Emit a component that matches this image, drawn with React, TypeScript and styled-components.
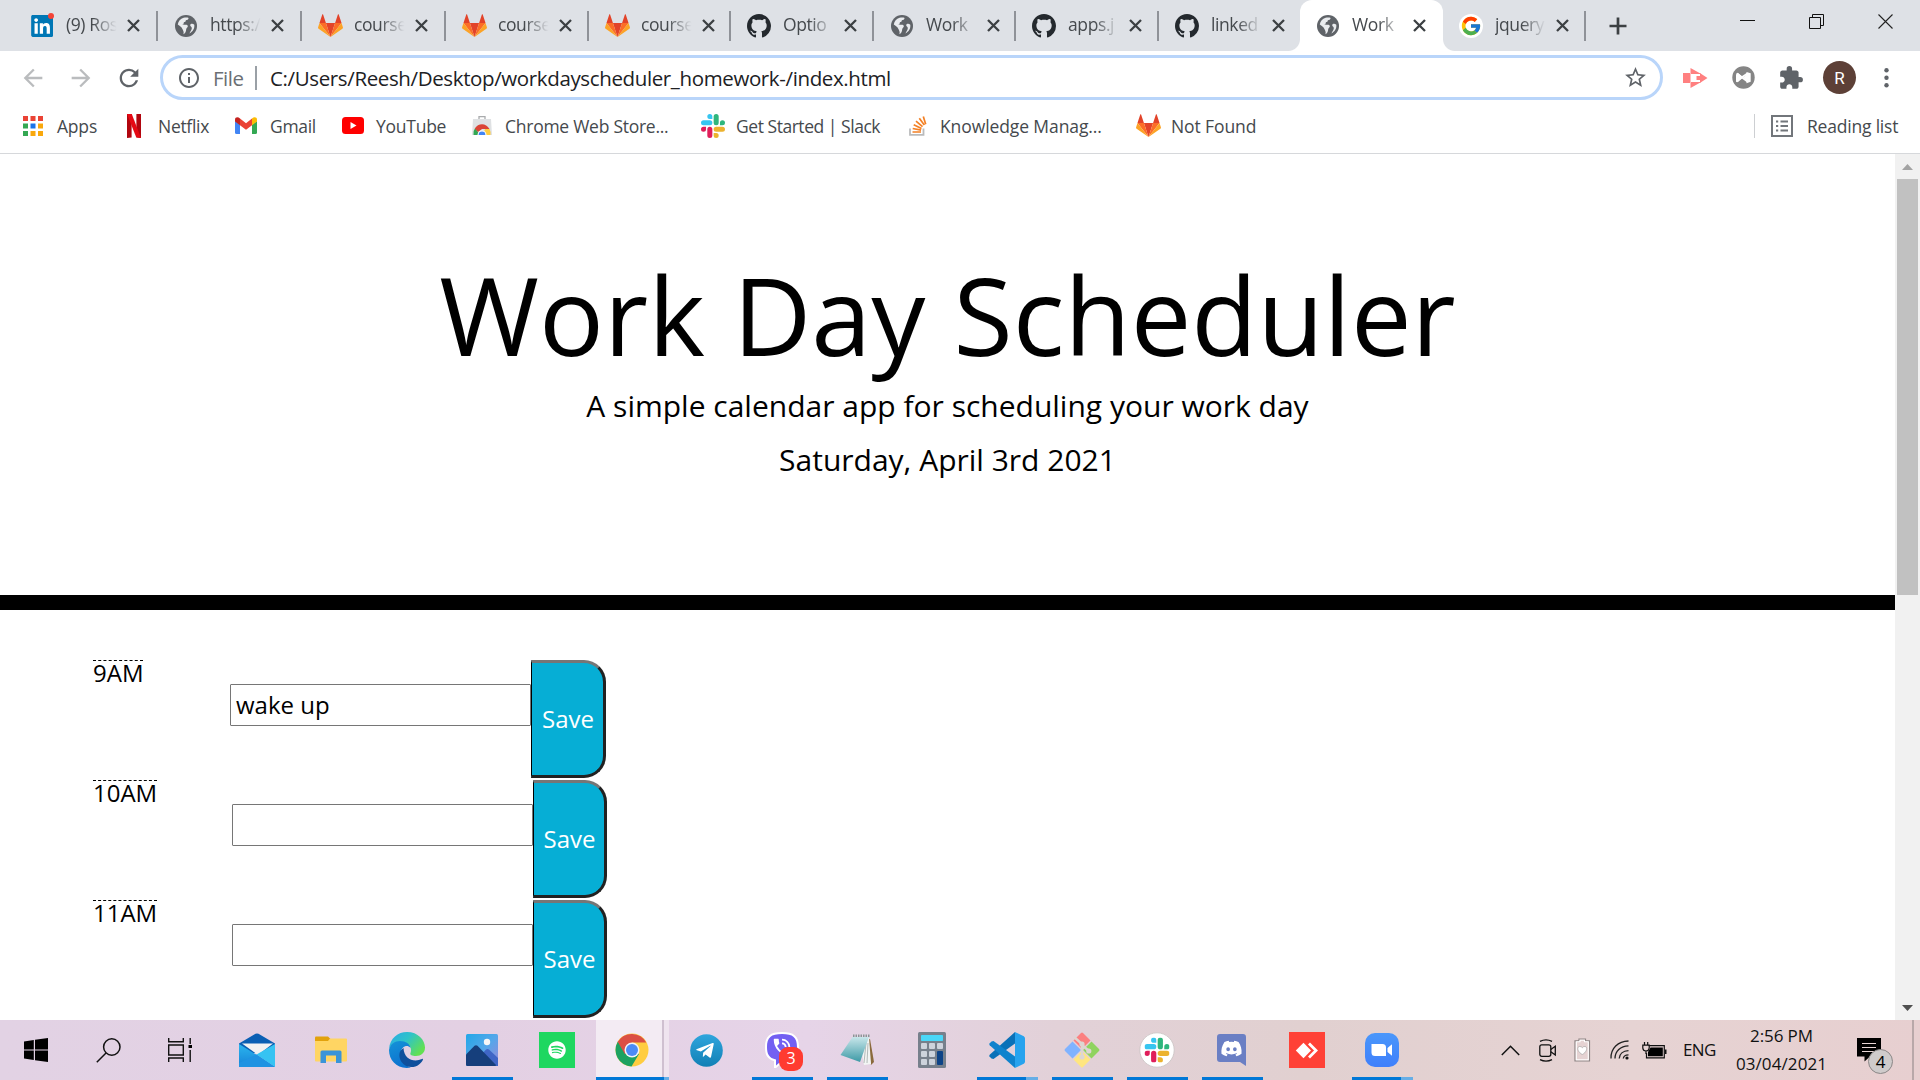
import React from "react";
import styled, { createGlobalStyle } from "styled-components";
import {
  MdArrowBack,
  MdArrowForward,
  MdRefresh,
  MdInfoOutline,
  MdStarBorder,
  MdExtension,
  MdPhoneInTalk,
} from "react-icons/md";
import { FaLinkedin, FaTelegramPlane, FaDiscord, FaSpotify } from "react-icons/fa";
import { FcGoogle } from "react-icons/fc";

const GlobalStyle = createGlobalStyle`
  * { box-sizing: border-box; }
  body {
    margin: 0;
    background: #fff;
    font-family: "Open Sans", "Noto Sans", sans-serif;
    overflow: hidden;
  }
  svg { display: block; flex: none; }
`;

/* ---------- Shell ---------- */

const Screen = styled.div`
  width: 1920px;
  height: 1080px;
  display: flex;
  flex-direction: column;
  overflow: hidden;
  background: #fff;
`;

/* ---------- Tab strip ---------- */

const TabStrip = styled.div`
  height: 51px;
  flex: none;
  display: flex;
  background: #dee1e6;
  padding-left: 14px;
`;

const TabBox = styled.div<{ $width: number; $active?: boolean; $divider?: boolean }>`
  position: relative;
  width: ${(p) => p.$width}px;
  height: 51px;
  flex: none;
  display: flex;
  align-items: center;
  padding-left: 16px;
  background: ${(p) => (p.$active ? "#fff" : "transparent")};
  border-radius: ${(p) => (p.$active ? "12px 12px 0 0" : "0")};
  &::after {
    content: "";
    display: ${(p) => (p.$divider ? "block" : "none")};
    position: absolute;
    right: 0;
    top: 11px;
    width: 2px;
    height: 30px;
    background: #8f9298;
  }
`;

const TabFoot = styled.span<{ $side: "left" | "right" }>`
  position: absolute;
  bottom: 0;
  ${(p) => p.$side}: -12px;
  width: 12px;
  height: 12px;
  background: radial-gradient(
    circle at ${(p) => (p.$side === "left" ? "0 0" : "100% 0")},
    #dee1e6 11.5px,
    #fff 12.5px
  );
`;

const TabIcon = styled.div`
  position: relative;
  width: 24px;
  height: 24px;
  flex: none;
  display: grid;
  place-items: center;
`;

const TabTitle = styled.div`
  width: 55px;
  margin-left: 12px;
  padding-bottom: 2px;
  line-height: 49px;
  font-size: 17.5px;
  letter-spacing: -0.4px;
  color: #45494d;
  white-space: nowrap;
  mask-image: linear-gradient(to right, #000 48%, transparent 92%);
`;

const TabClose = styled.div`
  margin-left: 6px;
`;

const NewTab = styled.div`
  height: 51px;
  margin-left: 23px;
  display: flex;
  align-items: center;
`;

const WindowControls = styled.div`
  margin-left: auto;
  height: 43px;
  display: grid;
  grid-template-columns: repeat(3, 69px);
  place-items: center;
`;

const NoticeDot = styled.span`
  position: absolute;
  right: 0;
  top: -1px;
  width: 6px;
  height: 6px;
  border-radius: 50%;
  background: #f44336;
`;

const WhiteDisc = styled.div`
  width: 24px;
  height: 24px;
  border-radius: 50%;
  background: #fff;
  display: grid;
  place-items: center;
`;

/* ---------- Toolbar ---------- */

const Toolbar = styled.div`
  height: 53px;
  flex: none;
  display: flex;
  align-items: center;
`;

const NavButtons = styled.div`
  width: 160px;
  display: flex;
  align-items: center;
  gap: 20px;
  padding-left: 19px;
  color: #babcbe;
`;

const Omnibox = styled.div`
  width: 1503px;
  height: 45px;
  display: flex;
  align-items: center;
  border: 3px solid #b9d5fa;
  border-radius: 23px;
  padding: 0 12px 0 14px;
  color: #5f6368;
`;

const Scheme = styled.span`
  margin-left: 12px;
  width: 42px;
  padding-top: 1px;
  line-height: 38px;
  font-size: 20.5px;
  letter-spacing: -0.5px;
  color: #6b6f74;
`;

const OmniDivider = styled.span`
  width: 2px;
  height: 24px;
  background: #9aa0a6;
`;

const Url = styled.span`
  flex: 1;
  margin-left: 13px;
  padding-top: 1px;
  font-size: 20.5px;
  line-height: 38px;
  letter-spacing: -0.37px;
  color: #202124;
  white-space: nowrap;
`;

const Extensions = styled.div`
  flex: 1;
  display: flex;
  align-items: center;
  padding-left: 20px;
  color: #5f6368;
`;

const ExtensionSlot = styled.div<{ $width: number }>`
  width: ${(p) => p.$width}px;
  flex: none;
`;

const Avatar = styled.div`
  width: 33px;
  height: 33px;
  margin-right: 28px;
  border-radius: 50%;
  background: #5d4037;
  color: #fff;
  font: 17px/34px Roboto, sans-serif;
  text-align: center;
`;

/* ---------- Bookmarks ---------- */

const BookmarkBar = styled.div`
  height: 50px;
  flex: none;
  display: flex;
  align-items: center;
  padding: 0 0 6px 23px;
  border-bottom: 1px solid #d6d8db;
  font-size: 17.5px;
  color: #45494d;
`;

const Bookmark = styled.div<{ $width: number }>`
  width: ${(p) => p.$width}px;
  flex: none;
  display: flex;
  align-items: center;
`;

const BookmarkIcon = styled.div<{ $slot: number }>`
  width: ${(p) => p.$slot}px;
  flex: none;
`;

const BookmarkText = styled.span<{ $spacing: number }>`
  line-height: 24px;
  letter-spacing: ${(p) => p.$spacing}px;
  white-space: nowrap;
`;

const ReadingList = styled.div`
  margin-left: auto;
  width: 166px;
  height: 24px;
  display: flex;
  align-items: center;
  gap: 14px;
  padding-left: 16px;
  border-left: 1px solid #cdcfd2;
`;

/* ---------- Page ---------- */

const Viewport = styled.div`
  height: 866px;
  flex: none;
  display: flex;
`;

const Page = styled.main`
  width: 1895px;
  height: 866px;
  overflow: hidden;
  color: #000;
`;

const Jumbotron = styled.header`
  height: 456px;
  padding-top: 96px;
  border-bottom: 15px solid #000;
  text-align: center;
`;

const Title = styled.h1`
  margin: 0 0 3px;
  font-size: 108px;
  font-weight: 400;
  line-height: 130px;
`;

const Lead = styled.p`
  margin: 0 0 9px;
  font-size: 30px;
  line-height: 45px;
`;

const Schedule = styled.section`
  padding: 50px 0 0 93px;
`;

const TimeBlock = styled.div`
  height: 120px;
  display: flex;
  align-items: flex-start;
`;

const HourColumn = styled.div<{ $width: number }>`
  width: ${(p) => p.$width}px;
`;

const Hour = styled.div`
  width: max-content;
  border-top: 1px dashed #000;
  font-size: 24px;
  line-height: 24px;
`;

const Entry = styled.div`
  width: 301px;
  height: 42px;
  margin-top: 24px;
  padding-left: 5px;
  border: 1px solid #767676;
  border-radius: 1px;
  font-size: 24px;
  line-height: 39px;
`;

const SaveButton = styled.button<{ $width: number }>`
  width: ${(p) => p.$width}px;
  height: 118px;
  padding: 0 0 2px 1px;
  border-style: solid;
  border-width: 3px 3px 3px 1px;
  border-color: #767676 #212121 #212121 #000;
  border-radius: 0 22px 22px 0;
  background: #06aed5;
  color: #fff;
  font: 24px/33px "Open Sans", sans-serif;
`;

const ScrollBar = styled.div`
  width: 25px;
  height: 866px;
  display: flex;
  flex-direction: column;
  align-items: center;
  background: #f1f1f1;
`;

const ScrollThumb = styled.div`
  width: 21px;
  height: 416px;
  margin-bottom: auto;
  background: #c1c1c1;
`;

const ScrollArrow = styled.div`
  height: 25px;
  display: grid;
  place-items: center;
`;

/* ---------- Taskbar ---------- */

const TaskBar = styled.footer`
  height: 60px;
  flex: none;
  display: flex;
  background: linear-gradient(
    90deg,
    #e2d2e4 0%,
    #e3d0e3 25%,
    #e6d4e8 42%,
    #e2d1d8 55%,
    #e1d0d0 68%,
    #e6d3d3 85%,
    #e7cfd0 100%
  );
`;

const SystemButtons = styled.div`
  width: 219px;
  display: grid;
  grid-template-columns: 72px 72px 72px;
  place-items: center;
`;

const AppCell = styled.div<{ $active?: boolean }>`
  position: relative;
  width: 75px;
  height: 60px;
  flex: none;
  display: grid;
  place-items: center;
  background: ${(p) =>
    p.$active
      ? "linear-gradient(90deg, transparent 2px, #f3ebf3 2px, #f3ebf3 68px, #cfc0d0 68px, #cfc0d0 70px, #efe4ef 70px, #efe4ef 75px)"
      : "none"};
`;

const Running = styled.span<{ $kind: "single" | "stack" | "active" }>`
  position: absolute;
  bottom: 0;
  left: ${(p) => (p.$kind === "active" ? 2 : 8)}px;
  width: ${(p) => (p.$kind === "active" ? 73 : 61)}px;
  height: 3px;
  background: ${(p) =>
    p.$kind === "single"
      ? "#0078d7"
      : `linear-gradient(90deg, #0078d7 ${p.$kind === "active" ? 68 : 49}px, #66aee6 0)`};
`;

const Badge = styled.span`
  position: absolute;
  left: 35px;
  top: 27px;
  width: 24px;
  height: 24px;
  border-radius: 9px;
  background: #ff3b30;
  color: #fff;
  font-size: 16px;
  line-height: 23px;
  text-align: center;
`;

const IconTile = styled.div<{ $color: string; $width: number }>`
  width: ${(p) => p.$width}px;
  height: 36px;
  background: ${(p) => p.$color};
  color: #fff;
  display: grid;
  place-items: center;
`;

const Tray = styled.div`
  margin-left: auto;
  width: 419px;
  display: flex;
  align-items: center;
  color: #111;
`;

const TraySlot = styled.div<{ $width: number }>`
  width: ${(p) => p.$width}px;
  flex: none;
`;

const Language = styled.div`
  width: 52px;
  font-size: 17px;
  line-height: 60px;
  letter-spacing: -0.6px;
`;

const Clock = styled.div`
  width: 93px;
  font-size: 17px;
  line-height: 28px;
  text-align: center;
  white-space: nowrap;
`;

const ClockLine = styled.div<{ $spacing: number }>`
  letter-spacing: ${(p) => p.$spacing}px;
`;

const Notifications = styled.div`
  position: relative;
  margin-left: 29px;
  width: 55px;
  height: 60px;
  padding-top: 18px;
`;

const CountBadge = styled.span`
  position: absolute;
  left: 11px;
  top: 29px;
  width: 25px;
  height: 25px;
  border: 1px solid #8b8787;
  border-radius: 50%;
  background: #cfcbcb;
  font-size: 17px;
  line-height: 23px;
  text-align: center;
  color: #000;
`;

const ShowDesktop = styled.div`
  width: 7px;
  height: 60px;
  border-left: 2px solid #b8a8a9;
`;

/* ---------- Drawings ---------- */

const Globe = () => (
  <svg width="22" height="22" viewBox="0 0 22 22">
    <circle cx="11" cy="11" r="11" fill="#5f6368" />
    <path d="M2.8 9.6C3.2 6.4 5.4 3.8 8.6 2.8C10.400 2.300 12.600 2.400 13.600 2.900C13.400 4.500 12.200 5 10.800 5.200C11 6.600 10 6.900 8.800 7.200C9.200 8.400 8.200 9 7.400 9.400C9.600 9.800 12.400 9.200 12.800 10.800C13.200 12.400 11.400 12.800 11.200 14.200C11 16 10.800 18 8.400 19.200C9.200 16.400 8 15.600 7.400 14C6.600 12 4.600 10.800 2.800 9.600ZM19.300 9.800C17.800 8.300 15.600 8.600 15.200 10.100C15 11.600 17 11.600 16.800 13.200C16.600 14.800 15.800 16 14.400 18.400C17.800 16.800 19.800 13.400 19.300 9.800Z" fill="#e9ebee" />
  </svg>
);

const GitHubMark = () => (
  <svg width="24" height="24" viewBox="0 0 16 16">
    <path fill="#24292e" d="M8 0C3.58 0 0 3.58 0 8c0 3.54 2.29 6.53 5.47 7.59.4.07.55-.17.55-.38 0-.19-.01-.82-.01-1.49-2.01.37-2.53-.49-2.69-.94-.09-.23-.48-.94-.82-1.13-.28-.15-.68-.52-.01-.53.63-.01 1.08.58 1.23.82.72 1.21 1.87.87 2.33.66.07-.52.28-.87.51-1.07-1.78-.2-3.64-.89-3.64-3.95 0-.87.31-1.59.82-2.15-.08-.2-.36-1.02.08-2.12 0 0 .67-.21 2.2.82.64-.18 1.32-.27 2-.27s1.36.09 2 .27c1.53-1.04 2.2-.82 2.2-.82.44 1.1.16 1.92.08 2.12.51.56.82 1.27.82 2.15 0 3.07-1.87 3.75-3.65 3.95.29.25.54.73.54 1.48 0 1.07-.01 1.93-.01 2.2 0 .21.15.46.55.38A8.01 8.01 0 0 0 16 8c0-4.42-3.58-8-8-8z" />
  </svg>
);

const GitLab = () => (
  <svg width="25" height="23" viewBox="0 0 24 22">
    <path d="M12 22 16.4 8.5H7.6Z" fill="#e24329" />
    <path d="M12 22 7.6 8.5H1.4ZM12 22 16.4 8.5H22.6Z" fill="#fc6d26" />
    <path d="M1.4 8.5.1 12.6C-.1 13.2.1 13.7.6 14L12 22ZM22.6 8.5 23.9 12.6C24.1 13.2 23.9 13.7 23.4 14L12 22Z" fill="#fca326" />
    <path d="M1.4 8.5H7.6L4.9.4C4.8 0 4.2 0 4.1.4ZM22.6 8.5H16.4L19.1.4C19.2 0 19.8 0 19.9.4Z" fill="#e24329" />
  </svg>
);

const Slack = ({ size }: { size: number }) => (
  <svg width={size} height={size} viewBox="0 0 24 24">
    <path fill="#e01e5a" d="M5.04 15.17a2.52 2.52 0 1 1-2.52-2.52h2.52zM6.31 15.17a2.52 2.52 0 0 1 5.04 0v6.31a2.52 2.52 0 0 1-5.04 0z" />
    <path fill="#36c5f0" d="M8.83 5.04a2.52 2.52 0 1 1 2.52-2.52v2.52zM8.83 6.31a2.52 2.52 0 0 1 0 5.04H2.52a2.52 2.52 0 0 1 0-5.04z" />
    <path fill="#2eb67d" d="M18.96 8.83a2.52 2.52 0 1 1 2.52 2.52h-2.52zM17.69 8.83a2.52 2.52 0 0 1-5.04 0V2.52a2.52 2.52 0 0 1 5.04 0z" />
    <path fill="#ecb22e" d="M15.17 18.96a2.52 2.52 0 1 1-2.52 2.52v-2.52zM15.17 17.69a2.52 2.52 0 0 1 0-5.04h6.31a2.52 2.52 0 0 1 0 5.04z" />
  </svg>
);

const LinkedIn = () => (
  <>
    <svg width="22" height="22" viewBox="0 0 22 22">
      <rect x="2" y="2" width="18" height="18" fill="#fff" />
      <FaLinkedin x="-1.4" y="-1.5" width="25" height="25" size={25} color="#0077b5" />
    </svg>
    <NoticeDot />
  </>
);

const AppsGrid = () => (
  <svg width="20" height="20" viewBox="0 0 20 20">
    {["#ea4335", "#ea4335", "#ea4335", "#34a853", "#1a73e8", "#f9a80c", "#34a853", "#f9a80c", "#f9a80c"].map((c, i) => (
      <rect key={i} x={(i % 3) * 7.5} y={Math.floor(i / 3) * 7.5} width="5" height="5" fill={c} />
    ))}
  </svg>
);

const Netflix = () => (
  <svg width="14" height="24" viewBox="0 0 14 24">
    <path d="M0 0h4.6v23.4L0 24ZM9.4 0H14v24l-4.6-.6Z" fill="#b1060f" />
    <path d="M0 0h4.8L14 24l-4.8-.7Z" fill="#e50914" />
  </svg>
);

const Gmail = () => (
  <svg width="22" height="17" viewBox="0 0 22 17">
    <path d="M0 4 5 7.6V17H1.5A1.5 1.5 0 0 1 0 15.5Z" fill="#4285f4" />
    <path d="M17 7.6 22 4V15.5A1.5 1.5 0 0 1 20.5 17H17Z" fill="#34a853" />
    <path d="M17 1.5C19-.5 22 0 22 2.7V4.5L17 8.2Z" fill="#fbbc04" />
    <path d="M5 1.5 11 6.2 17 1.5V8.2L11 12.7 5 8.2Z" fill="#ea4335" />
    <path d="M0 2.7C0 0 3-.5 5 1.5V8.2L0 4.5Z" fill="#c5221f" />
  </svg>
);

const YouTube = () => (
  <svg width="22" height="17" viewBox="0 0 22 17">
    <rect width="22" height="17" rx="3.5" fill="#f00" />
    <path d="M8.5 5v7l6-3.5Z" fill="#fff" />
  </svg>
);

const WebStore = () => (
  <svg width="20" height="20" viewBox="0 0 20 20">
    <path d="M7 3V.7h6V3" fill="none" stroke="#a9abad" strokeWidth="1.3" />
    <path d="M1 3h18l1 16H0Z" fill="#dfe1e3" />
    <path d="M1.5 19a8.5 8.5 0 0 1 1.7-7L8 19Z" fill="#34a853" />
    <path d="M2.8 12.6C6 7 14 6.5 17.5 13H10l-4 3Z" fill="#db4437" />
    <path d="M17.5 13a9 9 0 0 1 1 6H11l2-6Z" fill="#ffcd40" />
    <path d="M5.5 19a4.5 4.5 0 0 1 9 0Z" fill="#fff" />
    <path d="M6.6 19a3.4 3.4 0 0 1 6.8 0Z" fill="#4285f4" />
  </svg>
);

const StackOverflow = () => (
  <svg width="18" height="20" viewBox="0 0 18 20">
    <path d="M1 12.5V18.8H14.5V12.5" fill="none" stroke="#babbbc" strokeWidth="1.8" />
    <g stroke="#f48024" strokeWidth="1.7">
      <path d="M3.5 16H12M3.7 12.5 12.1 14.2M4.7 8.8 12.5 12.4M7 5.2 13.5 10.6M10.3 2.3 15.3 9.1M14.3.4 16.7 8.3" />
    </g>
  </svg>
);

const TabCross = () => (
  <svg width="13" height="13" viewBox="0 0 13 13">
    <path d="M1 1 12 12M12 1 1 12" stroke="#3c4043" strokeWidth="2.300" />
  </svg>
);

const Plus = () => (
  <svg width="18" height="18" viewBox="0 0 18 18">
    <path d="M9 .5V17.500M.5 9H17.500" stroke="#3c4043" strokeWidth="2.700" />
  </svg>
);

const Screencast = () => (
  <svg width="25" height="20" viewBox="0 0 25 20">
    <path d="M0 5H7.500V15H0ZM7.500 0 16.500 5H7.500ZM7.500 20V15H16.500ZM18 5.800 24.500 10 18 14.200Z" fill="#ff8080" />
    <path d="M8 5.500H17.500V14.500H8" fill="none" stroke="#ff8080" strokeWidth="1" />
    <path d="M17.500 8H13.500V12H17.500Z" fill="#ff8080" />
  </svg>
);

const VsBadge = () => (
  <svg width="23" height="23" viewBox="0 0 23 23">
    <circle cx="11.5" cy="11.5" r="11.2" fill="#858585" />
    <path d="M4.300 7.500 5.800 6.800 14.500 14.500V8.500L5.800 16.200 4.300 15.500ZM14.500 6 18.700 7.200V15.800L14.500 17.200Z" fill="#fff" />
    <path d="M5 8.500V14.500L15.500 7.500M5.500 8 15.500 15.500" fill="none" stroke="#fff" strokeWidth="2" />
  </svg>
);

const MenuDots = () => (
  <svg width="5" height="20" viewBox="0 0 5 20">
    <circle cx="2.500" cy="2.300" r="2.200" fill="#5f6368" />
    <circle cx="2.500" cy="9.800" r="2.200" fill="#5f6368" />
    <circle cx="2.500" cy="17.300" r="2.200" fill="#5f6368" />
  </svg>
);

const ReadingListIcon = () => (
  <svg width="22" height="22" viewBox="0 0 22 22">
    <rect x="1" y="1" width="20" height="20" fill="none" stroke="#72767b" strokeWidth="2" />
    <path d="M5 6.500H7.200M9.500 6.500H17M5 11H7.200M9.500 11H17M5 15.500H7.200M9.500 15.500H17" stroke="#72767b" strokeWidth="2" />
  </svg>
);

const MinimizeGlyph = () => (
  <svg width="15" height="15" viewBox="0 0 15 15">
    <path d="M0 6.500h15" stroke="#111" strokeWidth="1" />
  </svg>
);

const RestoreGlyph = () => (
  <svg width="15" height="15" viewBox="0 0 15 15" fill="none" stroke="#111" strokeWidth="1">
    <path d="M.5 3.5h11v11h-11ZM3.5 3.5V.5h11v11h-3" />
  </svg>
);

const CloseGlyph = () => (
  <svg width="15" height="15" viewBox="0 0 15 15">
    <path d="M.5.5l14 14M14.5.5l-14 14" stroke="#222" strokeWidth="1.1" />
  </svg>
);

const WindowsLogo = () => (
  <svg width="24" height="24" viewBox="0 0 24 24">
    <path d="M0 3.4 9.8 2v9.4H0ZM11 1.8 24 0v11.4H11ZM0 12.5h9.8V22L0 20.6ZM11 12.5h13V24l-13-1.8Z" fill="#000" />
  </svg>
);

const SearchGlyph = () => (
  <svg width="25" height="25" viewBox="0 0 25 25" fill="none" stroke="#111" strokeWidth="1.5">
    <circle cx="15.8" cy="9" r="8.2" />
    <path d="M10 15 .8 24.2" />
  </svg>
);

const TaskViewGlyph = () => (
  <svg width="24" height="24" viewBox="0 0 24 24" fill="none" stroke="#111" strokeWidth="1.4">
    <path d="M.7 0v3.8h14.6V0M.7 24v-4h14.6v4M.7 7h14.6v10H.7ZM22.2 0v6M22.2 12v12" />
    <path d="M20.5 8.5H24" stroke="#000" strokeWidth="3" />
  </svg>
);

const MailIcon = () => (
  <svg width="36" height="34" viewBox="0 0 36 34">
    <defs>
      <linearGradient id="mailBody" x1="0" y1="0" x2="0" y2="1">
        <stop offset="0" stopColor="#2bb5ee" />
        <stop offset="1" stopColor="#1683d8" />
      </linearGradient>
    </defs>
    <path d="M0 10.5 16.5.8Q18 0 19.5.8L36 10.5V20H0Z" fill="#0a5fb4" />
    <path d="M3 10.5H34L19 22Z" fill="#f2f2f2" />
    <path d="M0 11 18 22 36 34H0Z" fill="url(#mailBody)" />
    <path d="M36 11 17.5 21.5 36 34Z" fill="#36c3f2" />
    <path d="M0 34V30L17.500 21.500 36 34Z" fill="#1f93e2" />
  </svg>
);

const FolderIcon = () => (
  <svg width="33" height="28" viewBox="0 0 33 28">
    <path d="M0 6V1.5Q0 .5 1 .5H13l2.5 2.5L13 6Z" fill="#e2a20c" />
    <path d="M0 5H13L15 2.5H31Q32 2.5 32 3.5V24.5Q32 25.5 31 25.5H1Q0 25.5 0 24.5Z" fill="#ffd563" />
    <path d="M5.5 27V16Q5.5 14.5 7 14.5H25Q26.5 14.5 26.5 16V27H21V19.5H11V27Z" fill="#3a94d8" />
  </svg>
);

const EdgeIcon = () => (
  <svg width="36" height="36" viewBox="0 0 36 36">
    <defs>
      <linearGradient id="edgeTop" x1="0" y1="0" x2="1" y2=".6">
        <stop offset="0" stopColor="#2aa8e8" />
        <stop offset=".5" stopColor="#2fc3c9" />
        <stop offset="1" stopColor="#62e052" />
      </linearGradient>
      <linearGradient id="edgeSide" x1="0" y1="0" x2=".4" y2="1">
        <stop offset="0" stopColor="#1593d8" />
        <stop offset="1" stopColor="#0c72cf" />
      </linearGradient>
    </defs>
    <path d="M0 17C1 6 9 0 18 0C29 0 36 8 36 15.5C36 21 32 24 27 24C23 24 20.5 23 21.5 21C23 18 22 11 13 10C7 9.5 2 12 0 17Z" fill="url(#edgeTop)" />
    <path d="M0 18C1 12 6 9 11 9C17 9 21 12 21.5 16C18 12 13 15 12 19C10 26 15 33 22 35.5C9 38 0 29 0 18Z" fill="url(#edgeSide)" />
    <path d="M14.5 16C9 19 9.5 26 13 30.5C17 36 25 36.5 30 32.5C32 31 33.5 29 34 27.5C34 26.5 33.5 26.5 33 27C25 30.5 15 27.5 14.5 16Z" fill="#0e4f9c" />
  </svg>
);

const PhotosIcon = () => (
  <svg width="32" height="32" viewBox="0 0 32 32">
    <defs>
      <linearGradient id="photoSky" x1="0" y1="0" x2="1" y2="1">
        <stop offset="0" stopColor="#22a7e8" />
        <stop offset=".5" stopColor="#53a7ea" />
        <stop offset="1" stopColor="#9a86d8" />
      </linearGradient>
    </defs>
    <rect width="32" height="32" rx="1.5" fill="url(#photoSky)" />
    <path d="M16 20 20 15.5Q21.5 14.5 23 15.5L32 24V32H20Z" fill="#3f66c6" />
    <path d="M0 20.5 8.5 11.8Q10 10.5 11.5 11.8L30 31Q30 32 29 32H1.5Q0 32 0 30.5Z" fill="#163f7c" />
    <circle cx="21" cy="8" r="3.2" fill="#f7f7f7" />
  </svg>
);

const ChromeIcon = () => (
  <svg width="34" height="34" viewBox="0 0 34 34">
    <circle cx="17" cy="17" r="16.5" fill="#ffcd40" />
    <path d="M17 17 2.7 8.8A16.5 16.5 0 0 0 16.5 33.5L24 21Z" fill="#1da261" />
    <path d="M17 17 9.8 21 2.7 8.8A16.5 16.5 0 0 1 31.3 9.6H17Z" fill="#db4f43" />
    <circle cx="17" cy="17" r="7.5" fill="#f4f4f4" />
    <circle cx="17" cy="17" r="6" fill="#4c8bf5" />
  </svg>
);

const TelegramIcon = () => (
  <svg width="33" height="33" viewBox="0 0 33 33">
    <defs>
      <linearGradient id="tg" x1="0" y1="0" x2="0" y2="1">
        <stop offset="0" stopColor="#2fa5dd" />
        <stop offset="1" stopColor="#1180b5" />
      </linearGradient>
    </defs>
    <circle cx="16.5" cy="16.5" r="16.3" fill="url(#tg)" />
    <FaTelegramPlane x="5" y="6.5" size={20} color="#fff" />
  </svg>
);

const ViberIcon = () => (
  <svg width="34" height="36" viewBox="0 0 34 36">
    <path d="M17 0C29 0 34 4 34 15C34 27 29 30 18 30L11 36H9V29C2 27 0 23 0 15C0 4 5 0 17 0Z" fill="#fff" />
    <path d="M17 2C28 2 32 5.5 32 15C32 25 28 28 17.5 28L11 33.5V27.5C4 26 2 22 2 15C2 5.5 6 2 17 2Z" fill="#7360f2" />
    <MdPhoneInTalk x="6" y="4" size={22} color="#fff" />
  </svg>
);

const NotepadIcon = () => (
  <svg width="34" height="32" viewBox="0 0 34 32">
    <defs>
      <linearGradient id="note" x1="0" y1="0" x2="0" y2="1">
        <stop offset="0" stopColor="#c8e6ea" />
        <stop offset="1" stopColor="#3d9aa6" />
      </linearGradient>
    </defs>
    <path d="M30 5 34 28 31 31 27 6Z" fill="#8a6a3c" />
    <path d="M29 3 31 30 24 31 20 8Z" fill="#f3f5f4" />
    <path d="M26 9 24 29M28 9 27 29" stroke="#b4bab9" strokeWidth="1" />
    <path d="M12.5 3H29L20 28 .5 21Z" fill="url(#note)" />
    <path d="M13 1.8H30" stroke="#8c9495" strokeWidth="2.5" strokeDasharray="1.5 1" />
  </svg>
);

const CalculatorIcon = () => (
  <svg width="28" height="36" viewBox="0 0 28 36">
    <rect width="28" height="36" rx="1.5" fill="#77808c" />
    <rect x="3" y="3" width="22" height="6" rx=".8" fill="#4ad7f8" />
    {[11, 19, 27].map((y) =>
      [3, 11, 19].map((x) =>
        x === 19 && y > 11 ? null : <rect key={`${x}-${y}`} x={x} y={y} width="6" height="6" rx="1" fill="#cdd3dc" />
      )
    )}
    <rect x="19" y="19" width="6" height="14" rx="1" fill="#0d4387" />
  </svg>
);

const VsCodeIcon = () => (
  <svg width="36" height="36" viewBox="0 0 36 36">
    <path d="M26 0V11.5L4.5 27 2.5 26.5.5 24.5Q0 23.5.7 22.8Z" fill="#0a71b8" />
    <path d="M26 36V24.5L4.5 9 2.5 9.5.5 11.5Q0 12.5.7 13.2Z" fill="#0f83cd" />
    <path d="M26 0 34.8 4.2Q36 5 36 6.2V29.8Q36 31 34.8 31.8L26 36Z" fill="#27a3ee" />
  </svg>
);

const GitIcon = () => (
  <svg width="36" height="36" viewBox="0 0 36 36">
    <path d="M17 1Q18 0 19 1L26.5 8.5 18 17 9.5 8.5Z" fill="#fb8080" />
    <path d="M27.5 9.5 35 17Q36 18 35 19L27.5 26.5 19 18Z" fill="#8fd35f" />
    <path d="M8.5 9.5 17 18 8.5 26.5 1 19Q0 18 1 17Z" fill="#80b3ff" />
    <path d="M18 19 26.5 27.5 19 35Q18 36 17 35L9.5 27.5Z" fill="#ffe680" />
    <path d="M10 5 18 12V25M18 13 25 19" fill="none" stroke="#ddd6d2" strokeWidth="2.5" />
    <circle cx="18" cy="12" r="2.6" fill="#ddd6d2" />
    <circle cx="18" cy="25" r="2.6" fill="#ddd6d2" />
    <circle cx="24.8" cy="19" r="2.6" fill="#ddd6d2" />
  </svg>
);

const SlackDisc = () => (
  <svg width="36" height="36" viewBox="0 0 36 36">
    <circle cx="18" cy="18" r="17.2" fill="#fff" stroke="#c9c3c3" strokeWidth=".8" />
    <g transform="translate(5.5 5.5)">
      <Slack size={25} />
    </g>
  </svg>
);

const DiscordIcon = () => (
  <svg width="29" height="32" viewBox="0 0 29 32">
    <path d="M3 0H26Q29 0 29 3V32L23 28H3Q0 28 0 25V3Q0 0 3 0Z" fill="#6a7fc4" />
    <FaDiscord x="3.5" y="3.5" size={22} color="#fff" />
  </svg>
);

const AnyDeskGlyph = () => (
  <svg width="24" height="17" viewBox="0 0 24 17">
    <path d="M8.500 .8 16 8.500 8.500 16.200.8 8.500Z" fill="#fff" />
    <path d="M14 1.500 21 8.500 14 15.500" fill="none" stroke="#fff" strokeWidth="2.800" />
  </svg>
);

const ZoomIcon = () => (
  <svg width="34" height="34" viewBox="0 0 34 34">
    <defs>
      <linearGradient id="zoomFill" x1="0" y1="0" x2="0" y2="1">
        <stop offset="0" stopColor="#4a97fb" />
        <stop offset="1" stopColor="#3f7ffb" />
      </linearGradient>
    </defs>
    <rect width="34" height="34" rx="10" fill="url(#zoomFill)" />
    <path d="M6.500 11H17.500Q21 11 21 14.500V23H10Q6.500 23 6.500 19.500ZM22.500 15 27 11.300V22.700L22.500 19Z" fill="#fff" />
  </svg>
);

const ChevronUp = () => (
  <svg width="19" height="11" viewBox="0 0 19 11">
    <path d="M.8 10 9.5 1.3 18.2 10" fill="none" stroke="#111" strokeWidth="1.5" />
  </svg>
);

const MeetNow = () => (
  <svg width="18" height="23" viewBox="0 0 18 23" fill="none" stroke="#111" strokeWidth="1.3">
    <rect x=".8" y="5.8" width="11" height="11.5" rx="2" />
    <path d="M11.8 10.5 16.3 7.2V16L11.8 12.7M1 2.3Q7 -.6 13 2.3M1 20.7Q7 23.6 13 20.7" />
  </svg>
);

const BatteryHealth = () => (
  <svg width="17" height="24" viewBox="0 0 17 24">
    <path d="M5 2.8V1h6.5v1.8h4V23H1V2.8Z" fill="none" stroke="#8d8585" strokeWidth="1.2" />
    <path d="M6 3.8V2.2h4.5v1.6h3.8v18h-12v-18Z" fill="none" stroke="#fff" strokeWidth="1.1" />
    <path d="M8.300 16.500C3.500 14 2.500 9 5.500 8.500Q7.500 8.300 8.300 9.800Q9 8.300 11 8.500C14 9 13 14 8.300 16.500Z" fill="#fff" stroke="#999" strokeWidth=".6" />
  </svg>
);

const WifiGlyph = () => (
  <svg width="20" height="20" viewBox="0 0 20 20" fill="none" stroke="#222" strokeWidth="1.3">
    <path d="M1 18.5C.6 8.5 8 1.2 18.5 1M5 18.5C5 11 10.5 6 18.5 5.8M9.2 18.5C9.4 14 13 10.8 18.5 10.6M13.3 18.5C13.5 16.5 15.5 15 18.5 14.9" />
    <circle cx="17" cy="18" r="1.6" fill="#111" stroke="none" />
  </svg>
);

const BatteryGlyph = () => (
  <svg width="25" height="17" viewBox="0 0 25 17">
    <path d="M6 3.7H22.3V15.8H4.5V11" fill="none" stroke="#111" strokeWidth="1.2" />
    <path d="M8.5 5.5H20.8V14.2H6V10Z" fill="#000" />
    <path d="M23 7.5h1.5v4.5H23Z" fill="#111" />
    <path d="M2.5 0v3M5.7 0v3M.8 3.2H7.2V6Q7 9 4 9Q1 9 .8 6ZM4 9v3" fill="#e6d3d3" stroke="#111" strokeWidth="1.2" />
  </svg>
);

const NotificationGlyph = () => (
  <svg width="24" height="24" viewBox="0 0 24 24">
    <path d="M0 0H24V18.5H13L7.5 23.5V18.5H0Z" fill="#000" />
    <path d="M5 5.5H19M5 9.5H19M5 13.5H19" stroke="#e8d5d5" strokeWidth="1.2" />
  </svg>
);

/* ---------- Data ---------- */

const tabs: { icon: React.ReactNode; title: string; width: number; active?: boolean; divider?: boolean }[] = [
  { icon: <LinkedIn />, title: "(9) Ros", width: 144, divider: true },
  { icon: <Globe />, title: "https:/", width: 144, divider: true },
  { icon: <GitLab />, title: "course", width: 144, divider: true },
  { icon: <GitLab />, title: "course", width: 143, divider: true },
  { icon: <GitLab />, title: "course", width: 142, divider: true },
  { icon: <GitHubMark />, title: "Optio", width: 143, divider: true },
  { icon: <Globe />, title: "Work", width: 142, divider: true },
  { icon: <GitHubMark />, title: "apps.j", width: 143, divider: true },
  { icon: <GitHubMark />, title: "linked", width: 141 },
  { icon: <Globe />, title: "Work", width: 143, active: true },
  {
    icon: (
      <WhiteDisc>
        <FcGoogle size={22} />
      </WhiteDisc>
    ),
    title: "jquery",
    width: 143,
    divider: true,
  },
];

const bookmarks = [
  { icon: <AppsGrid />, text: "Apps", width: 104, slot: 34, spacing: -0.2 },
  { icon: <Netflix />, text: "Netflix", width: 108, slot: 31, spacing: -0.3 },
  { icon: <Gmail />, text: "Gmail", width: 107, slot: 35, spacing: -0.3 },
  { icon: <YouTube />, text: "YouTube", width: 130, slot: 34, spacing: -0.25 },
  { icon: <WebStore />, text: "Chrome Web Store...", width: 229, slot: 33, spacing: -0.26 },
  { icon: <Slack size={24} />, text: "Get Started | Slack", width: 208, slot: 35, spacing: -0.46 },
  { icon: <StackOverflow />, text: "Knowledge Manag...", width: 227, slot: 31, spacing: -0.1 },
  { icon: <GitLab />, text: "Not Found", width: 130, slot: 35, spacing: -0.1 },
];

const hours = [
  { label: "9AM", entry: "wake up", offset: 137, button: 75 },
  { label: "10AM", entry: "", offset: 139, button: 74 },
  { label: "11AM", entry: "", offset: 139, button: 74 },
];

type RunKind = "single" | "stack" | "active";
const apps: { name: string; icon: React.ReactNode; running?: RunKind; badge?: string }[] = [
  { name: "mail", icon: <MailIcon /> },
  { name: "files", icon: <FolderIcon /> },
  { name: "edge", icon: <EdgeIcon /> },
  { name: "photos", icon: <PhotosIcon />, running: "single" },
  {
    name: "spotify",
    icon: (
      <IconTile $color="#1ed760" $width={36}>
        <FaSpotify size={18} />
      </IconTile>
    ),
  },
  { name: "chrome", icon: <ChromeIcon />, running: "active" },
  { name: "telegram", icon: <TelegramIcon /> },
  { name: "viber", icon: <ViberIcon />, running: "single", badge: "3" },
  { name: "notepad", icon: <NotepadIcon />, running: "single" },
  { name: "calculator", icon: <CalculatorIcon /> },
  { name: "vscode", icon: <VsCodeIcon />, running: "stack" },
  { name: "git", icon: <GitIcon />, running: "single" },
  { name: "slack", icon: <SlackDisc />, running: "single" },
  { name: "discord", icon: <DiscordIcon />, running: "single" },
  {
    name: "anydesk",
    icon: (
      <IconTile $color="#ff4136" $width={36}>
        <AnyDeskGlyph />
      </IconTile>
    ),
  },
  { name: "zoom", icon: <ZoomIcon />, running: "stack" },
];

export default function App() {
  return (
    <Screen>
      <GlobalStyle />
      <TabStrip>
        {tabs.map((t, i) => (
          <TabBox key={i} $width={t.width} $active={t.active} $divider={t.divider}>
            {t.active && <TabFoot $side="left" />}
            {t.active && <TabFoot $side="right" />}
            <TabIcon>{t.icon}</TabIcon>
            <TabTitle>{t.title}</TabTitle>
            <TabClose>
              <TabCross />
            </TabClose>
          </TabBox>
        ))}
        <NewTab>
          <Plus />
        </NewTab>
        <WindowControls>
          <MinimizeGlyph />
          <RestoreGlyph />
          <CloseGlyph />
        </WindowControls>
      </TabStrip>

      <Toolbar>
        <NavButtons>
          <MdArrowBack size={28} />
          <MdArrowForward size={28} />
          <MdRefresh size={28} color="#5f6368" />
        </NavButtons>
        <Omnibox>
          <MdInfoOutline size={24} />
          <Scheme>File</Scheme>
          <OmniDivider />
          <Url>C:/Users/Reesh/Desktop/workdayscheduler_homework-/index.html</Url>
          <MdStarBorder size={25} />
        </Omnibox>
        <Extensions>
          <ExtensionSlot $width={49}>
            <Screencast />
          </ExtensionSlot>
          <ExtensionSlot $width={46}>
            <VsBadge />
          </ExtensionSlot>
          <ExtensionSlot $width={45}>
            <MdExtension size={26} />
          </ExtensionSlot>
          <Avatar>R</Avatar>
          <MenuDots />
        </Extensions>
      </Toolbar>

      <BookmarkBar>
        {bookmarks.map((b) => (
          <Bookmark key={b.text} $width={b.width}>
            <BookmarkIcon $slot={b.slot}>{b.icon}</BookmarkIcon>
            <BookmarkText $spacing={b.spacing}>{b.text}</BookmarkText>
          </Bookmark>
        ))}
        <ReadingList>
          <ReadingListIcon />
          <BookmarkText $spacing={-0.2}>Reading list</BookmarkText>
        </ReadingList>
      </BookmarkBar>

      <Viewport>
        <Page>
          <Jumbotron>
            <Title>Work Day Scheduler</Title>
            <Lead>A simple calendar app for scheduling your work day</Lead>
            <Lead>Saturday, April 3rd 2021</Lead>
          </Jumbotron>
          <Schedule>
            {hours.map((h) => (
              <TimeBlock key={h.label}>
                <HourColumn $width={h.offset}>
                  <Hour>{h.label}</Hour>
                </HourColumn>
                <Entry>{h.entry}</Entry>
                <SaveButton $width={h.button}>Save</SaveButton>
              </TimeBlock>
            ))}
          </Schedule>
        </Page>
        <ScrollBar>
          <ScrollArrow>
            <svg width="11" height="6" viewBox="0 0 11 6">
              <path d="M0 6 5.5 0 11 6Z" fill="#a3a3a3" />
            </svg>
          </ScrollArrow>
          <ScrollThumb />
          <ScrollArrow>
            <svg width="11" height="6" viewBox="0 0 11 6">
              <path d="M0 0 5.5 6 11 0Z" fill="#505050" />
            </svg>
          </ScrollArrow>
        </ScrollBar>
      </Viewport>

      <TaskBar>
        <SystemButtons>
          <WindowsLogo />
          <SearchGlyph />
          <TaskViewGlyph />
        </SystemButtons>
        {apps.map((a) => (
          <AppCell key={a.name} $active={a.running === "active"}>
            {a.icon}
            {a.badge && <Badge>{a.badge}</Badge>}
            {a.running && <Running $kind={a.running} />}
          </AppCell>
        ))}
        <Tray>
          <TraySlot $width={38}>
            <ChevronUp />
          </TraySlot>
          <TraySlot $width={35}>
            <MeetNow />
          </TraySlot>
          <TraySlot $width={36}>
            <BatteryHealth />
          </TraySlot>
          <TraySlot $width={32}>
            <WifiGlyph />
          </TraySlot>
          <TraySlot $width={41}>
            <BatteryGlyph />
          </TraySlot>
          <Language>ENG</Language>
          <Clock>
            <ClockLine $spacing={-0.1}>2:56 PM</ClockLine>
            <ClockLine $spacing={0.1}>03/04/2021</ClockLine>
          </Clock>
          <Notifications>
            <NotificationGlyph />
            <CountBadge>4</CountBadge>
          </Notifications>
          <ShowDesktop />
        </Tray>
      </TaskBar>
    </Screen>
  );
}
